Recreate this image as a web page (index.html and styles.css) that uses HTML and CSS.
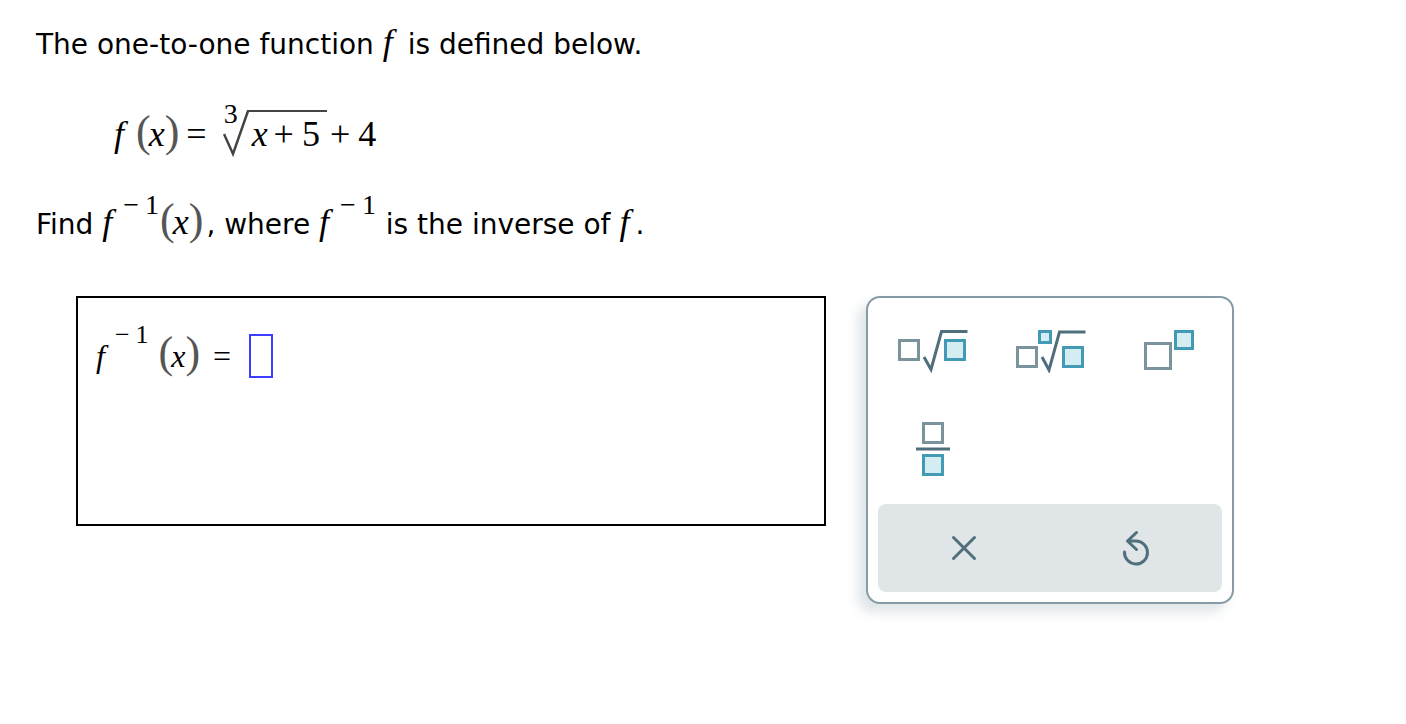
FILE: index.html
```html
<!DOCTYPE html>
<html lang="en">
<head>
<meta charset="UTF-8">
<meta name="viewport" content="width=device-width, initial-scale=1.0">
<title>Inverse of a one-to-one function</title>
<link rel="stylesheet" href="styles.css">
</head>
<body>
<main>
    <div class="question">
        <p>The one-to-one function <i class="math fn">f</i> is defined below.</p>
        <p class="formula math">
            <i>f</i><span class="paren open">(</span><i>x</i><span class="paren close">)</span><span class="equals">=</span><span class="root"><span class="root-index">3</span><svg class="root-tick" width="26" height="48" viewBox="0 0 26 48"><path d="M1 24l9 20L25 1h1"/></svg><span class="radicand"><i>x</i><span class="op">+</span>5</span></span><span class="plus">+</span>4
        </p>
        <p>Find <i class="math fn">f</i><span class="math sup">−<span class="one">1</span></span><span class="math"><span class="paren open">(</span><i>x</i><span class="paren close">)</span></span>, where <i class="math fn">f</i><span class="math sup">−<span class="one">1</span></span> is the inverse of <i class="math fn">f</i>.</p>
    </div>

    <div class="work">
        <div class="answer math">
            <label for="answerInput"><i>f</i><span class="sup">−<span class="one">1</span></span><span class="paren open">(</span><i>x</i><span class="paren close">)</span><span class="equals">=</span></label>
            <input type="text" id="answerInput">
        </div>

        <div class="palette">
            <div class="tools">
                <button type="button" aria-label="Square root">
                    <svg width="72" height="44" viewBox="0 0 72 44">
                        <rect class="box" x="3.5" y="11.5" width="19" height="19"/>
                        <path class="line" d="M28 28l7 12.500L45.500 2.500h26"/>
                        <rect class="box filled" x="49.5" y="11.5" width="19" height="19"/>
                    </svg>
                </button>
                <button type="button" aria-label="Nth root">
                    <svg width="72" height="44" viewBox="0 0 72 44">
                        <rect class="box" x="3.5" y="18.5" width="19" height="19"/>
                        <rect class="box filled" x="25.5" y="2.5" width="11" height="11"/>
                        <path class="line" d="M28 28l7 13L45.500 3h26"/>
                        <rect class="box filled" x="49.5" y="18.5" width="19" height="19"/>
                    </svg>
                </button>
                <button type="button" aria-label="Exponent">
                    <svg width="72" height="44" viewBox="0 0 72 44">
                        <rect class="box" x="13.5" y="14.5" width="25" height="25"/>
                        <rect class="box filled" x="43.5" y="2.5" width="17" height="17"/>
                    </svg>
                </button>
                <button type="button" aria-label="Fraction">
                    <svg width="72" height="60" viewBox="0 0 72 60">
                        <rect class="box" x="27.5" y="4.5" width="19" height="19"/>
                        <path class="line" d="M20 30h34"/>
                        <rect class="box filled" x="27.5" y="36.5" width="19" height="19"/>
                    </svg>
                </button>
            </div>
            <div class="actions">
                <button type="button" aria-label="Clear">
                    <svg width="40" height="40" viewBox="0 0 40 40"><path class="line round" d="M9.500 9.500l21 21M30.500 9.500l-21 21"/></svg>
                </button>
                <button type="button" aria-label="Undo">
                    <svg width="40" height="40" viewBox="0 0 40 40"><path class="line round" d="M8.500 24A11.500 11.500 0 1 0 20 13h-8.500M20.500 4.500L11.500 13l9 8.500"/></svg>
                </button>
            </div>
        </div>
    </div>
</main>
</body>
</html>
```
FILE: styles.css
```css
body {
    margin: 0;
    background-color: #fff;
    color: #000;
    font-family: Verdana, "DejaVu Sans", sans-serif;
    font-size: 28px;
    line-height: 48px;
}

.question {
    padding: 21px 36px 0;
}

p {
    margin: 0;
}

/* math */
.math {
    font-family: "Liberation Serif", "Times New Roman", serif;
    font-size: 36px;
    line-height: 40px;
}

.fn {
    margin-right: 6px;
}

.paren {
    font-size: 44px;
    line-height: 1px;
    color: #555;
}

.open {
    margin-right: -2px;
}

.close {
    margin-right: 3px;
}

.sup {
    font-size: 28px;
    line-height: 1px;
    vertical-align: 20px;
    margin: 0 1px 0 5px;
}

.one {
    margin-left: 6px;
}

.formula {
    padding: 41px 0 43px 78px;
}

.formula .open {
    margin-left: 12px;
}

.formula .equals {
    margin: 0 16px 0 4px;
}

.root {
    display: inline-flex;
    align-items: baseline;
    position: relative;
}

.root-index {
    position: absolute;
    left: 1px;
    top: -12px;
    font-size: 28px;
    line-height: 32px;
}

.root-tick {
    align-self: flex-start;
    fill: none;
    stroke: #444;
    stroke-width: 2.5;
}

.radicand {
    border-top: 2px solid #444;
    padding: 2px 7px 0 3px;
}

.op {
    margin: 0 8px 0 6px;
}

.plus {
    margin: 0 8px 0 3px;
}

/* answer box and palette */
.work {
    display: flex;
    align-items: flex-start;
    gap: 40px;
    padding: 47px 172px 40px 76px;
}

.answer {
    flex: 1;
    display: flex;
    align-items: flex-start;
    box-sizing: border-box;
    min-height: 230px;
    padding: 36px 18px;
    border: 2px solid #000;
    font-size: 32px;
}

.answer .sup {
    font-size: 26px;
    vertical-align: 24px;
    margin: 0 10px;
}

.answer .equals {
    margin: 0 18px 0 10px;
}

#answerInput {
    box-sizing: border-box;
    width: 24px;
    height: 44px;
    padding: 0;
    border: 2px solid #3d3dff;
    background: #fff;
    font: inherit;
    outline: none;
}

.palette {
    box-sizing: border-box;
    width: 368px;
    padding: 4px 5px;
    border: 2px solid #859ca6;
    border-radius: 14px;
    background-color: #fff;
    box-shadow: -8px 8px 12px rgba(80, 110, 125, 0.18);
}

.tools {
    display: grid;
    grid-template-columns: repeat(3, 1fr);
    grid-auto-rows: 98px;
}

.actions {
    display: grid;
    grid-template-columns: 1fr 1fr;
    height: 88px;
    margin: 6px 5px;
    border-radius: 8px;
    background-color: #e0e6e8;
}

button {
    display: flex;
    align-items: center;
    justify-content: center;
    padding: 0;
    border: none;
    background: none;
    cursor: pointer;
}

.box {
    fill: #fff;
    stroke: #7b939d;
    stroke-width: 3;
}

.filled {
    fill: #d4edf2;
    stroke: #439ab4;
}

.line {
    fill: none;
    stroke: #4f6f7d;
    stroke-width: 3;
}

.round {
    stroke-linecap: round;
    stroke-linejoin: round;
}
```
